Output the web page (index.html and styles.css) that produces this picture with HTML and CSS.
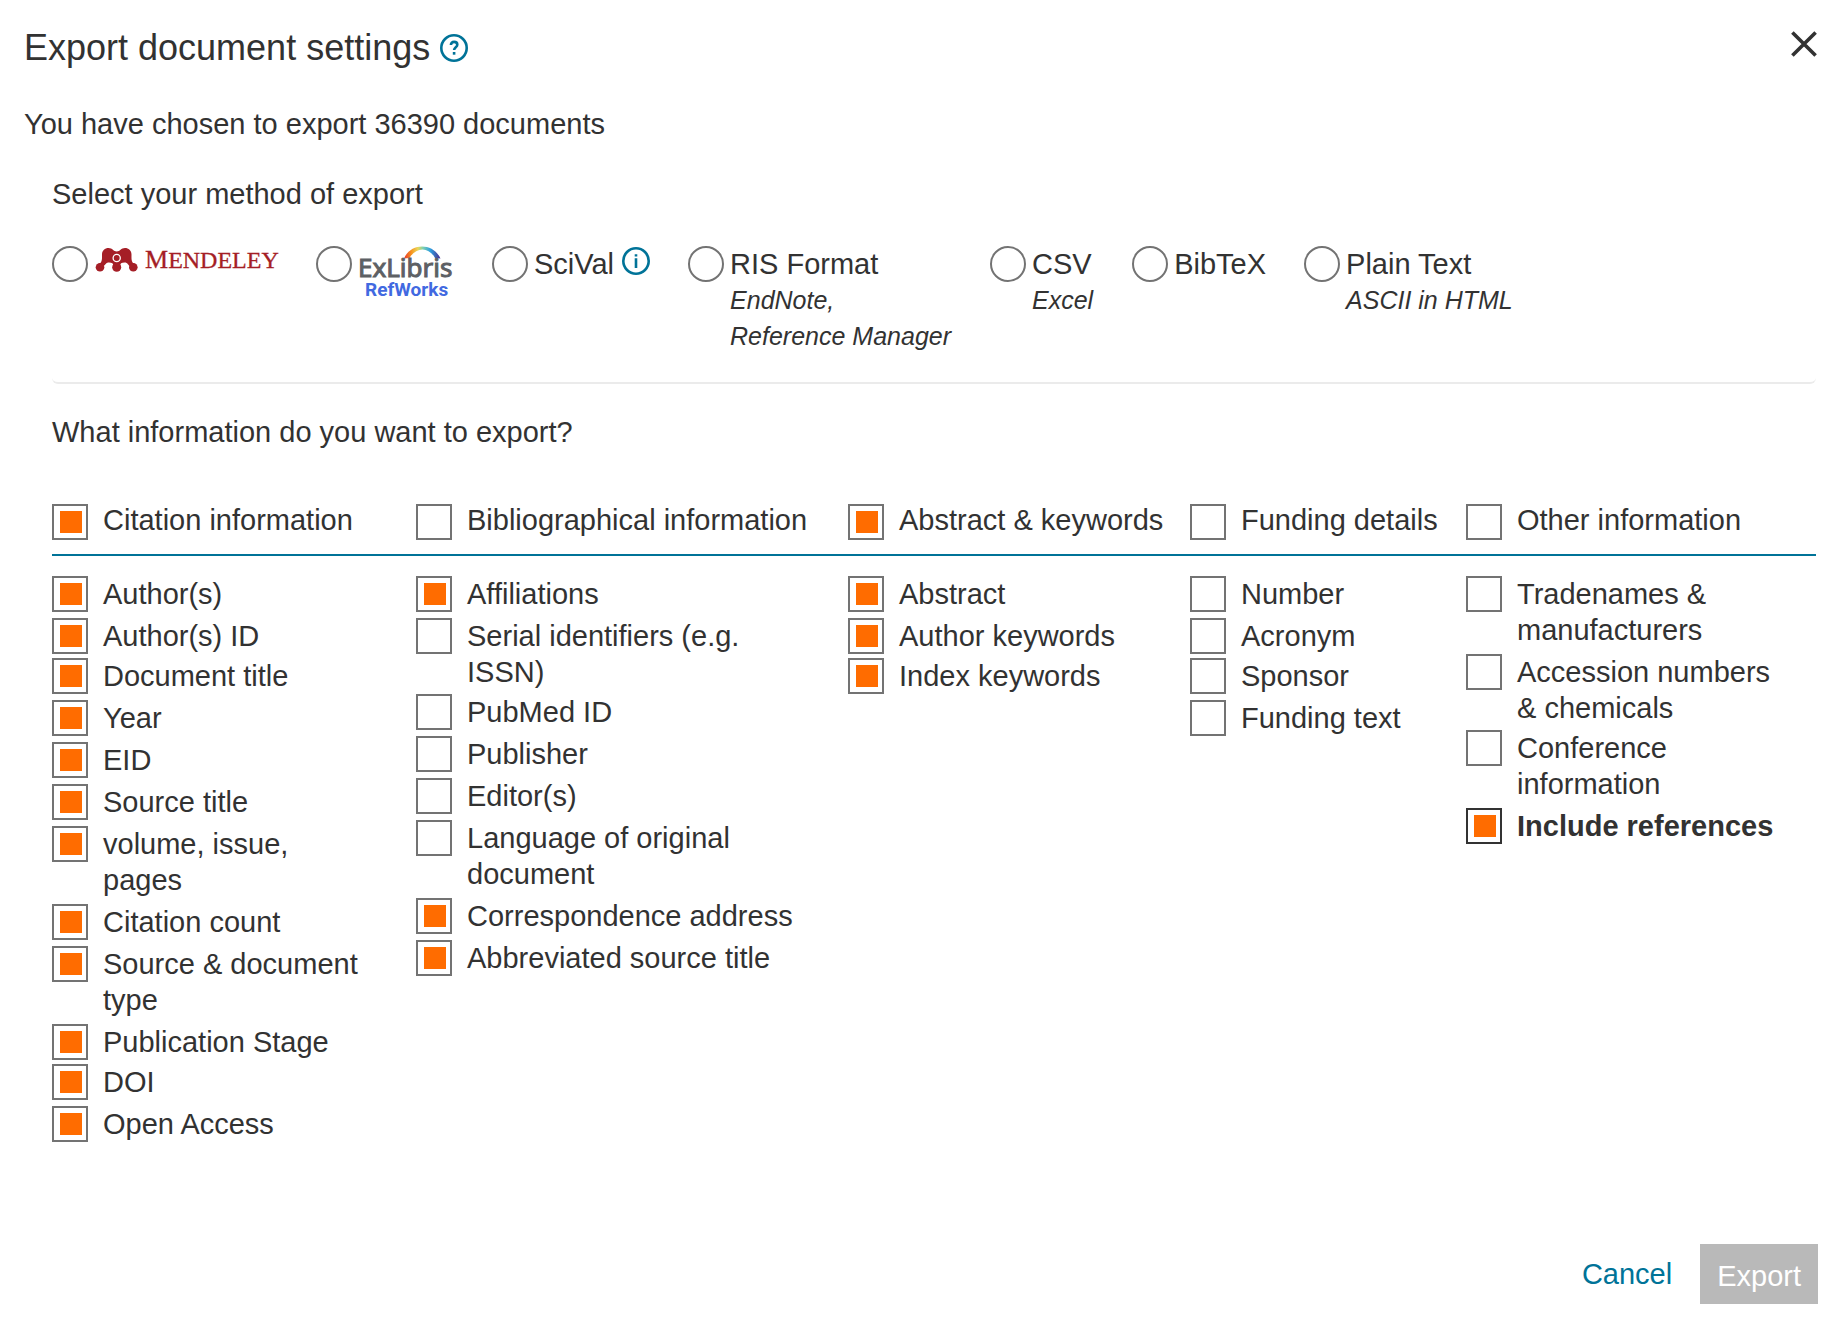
FILE: index.html
```html
<!DOCTYPE html>
<html lang="en">
<head>
<meta charset="utf-8">
<title>Export document settings</title>
<link rel="stylesheet" href="styles.css">
</head>
<body>
<form class="dialog" role="dialog" aria-labelledby="dialog-title">
  <header class="dialog-header">
    <h1 class="title" id="dialog-title">Export document settings</h1>
    <button class="icon-button" type="button" aria-label="Help">
      <svg class="info-icon" viewBox="0 0 28 28" aria-hidden="true"><circle cx="14" cy="14" r="12.7"/><path d="M10.9 11.1c0-2 1.3-3.2 3.2-3.2s3.2 1.1 3.2 2.8c0 2.5-3.2 2.500-3.2 5.400"/><path d="M14.1 18v2.700"/></svg>
    </button>
    <button class="icon-button close" type="button" aria-label="Close">
      <svg class="close-icon" viewBox="0 0 28 28" aria-hidden="true"><path d="M2.4 2.400l23.200 23.200M25.600 2.400L2.400 25.600"/></svg>
    </button>
  </header>

  <p class="summary">You have chosen to export 36390 documents</p>

  <div class="content">
    <section class="methods">
      <h2 class="question">Select your method of export</h2>
      <div class="method-list">
        <div class="method">
          <input class="radio" type="radio" name="method" id="mendeley">
          <label for="mendeley" aria-label="Mendeley">
            <svg class="mendeley" viewBox="0 0 184 36" aria-hidden="true">
              <g fill="#a51e26">
                <path d="M8 8.500C8 4.500 11 2 14.500 2c4 0 5 3.500 8.200 3.500S27 2 31 2c3.500 0 6.500 2.500 6.500 6.500 0 4-.5 8 3.500 9.500l-4.500 2.500C33.500 19 34 16.500 30.500 16.500c-3 0-4.500 1-4.500 3.500h-6.500c0-2.500-1.500-3.500-4.500-3.500-3.500 0-3 2.500-6.500 4L4.500 18C8.500 16.500 8 12.500 8 8.500z"/>
                <circle cx="6" cy="21.300" r="4.300"/><circle cx="22.700" cy="21.300" r="4.500"/><circle cx="39.300" cy="21.300" r="4.300"/>
              </g>
              <circle cx="22.700" cy="12" r="3.600" fill="#a51e26" stroke="#fff" stroke-width="1.300"/>
              <text class="mendeley-name" x="51" y="22">M<tspan class="mendeley-caps">ENDELEY</tspan></text>
            </svg>
          </label>
        </div>
        <div class="method">
          <input class="radio" type="radio" name="method" id="refworks">
          <label for="refworks" aria-label="ExLibris RefWorks">
            <svg class="refworks" viewBox="0 0 96 52" aria-hidden="true">
              <defs>
                <linearGradient id="rainbow" x1="0" x2="1"><stop offset="0" stop-color="#e8342b"/><stop offset=".2" stop-color="#f7931e"/><stop offset=".38" stop-color="#e9d75a"/><stop offset=".52" stop-color="#7fd0b0"/><stop offset=".72" stop-color="#2fa0e0"/><stop offset="1" stop-color="#4a2a8c"/></linearGradient>
              </defs>
              <path d="M46 12.500C53-3.500 75-3.500 82.500 12.500L77 12C71 .5 58 .5 51.500 12Z" fill="url(#rainbow)"/>
              <text class="exlibris-name" x="0" y="31">ExLibris</text>
              <text class="refworks-name" x="7" y="50">RefWorks</text>
            </svg>
          </label>
        </div>
        <div class="method">
          <input class="radio" type="radio" name="method" id="scival">
          <label for="scival">SciVal</label>
          <button class="icon-button scival-info" type="button" aria-label="About SciVal">
            <svg class="info-icon" viewBox="0 0 28 28" aria-hidden="true"><circle cx="14" cy="14" r="12.700"/><path d="M14 11.300v9.700M14 7.200v2.400"/></svg>
          </button>
        </div>
        <div class="method">
          <input class="radio" type="radio" name="method" id="ris">
          <label for="ris">RIS Format<span class="note">EndNote,<br>Reference Manager</span></label>
        </div>
        <div class="method">
          <input class="radio" type="radio" name="method" id="csv">
          <label for="csv">CSV<span class="note">Excel</span></label>
        </div>
        <div class="method">
          <input class="radio" type="radio" name="method" id="bibtex">
          <label for="bibtex">BibTeX</label>
        </div>
        <div class="method">
          <input class="radio" type="radio" name="method" id="plain">
          <label for="plain">Plain Text<span class="note">ASCII in HTML</span></label>
        </div>
      </div>
    </section>

    <section class="fields">
      <h2 class="question">What information do you want to export?</h2>
      <div class="field-grid field-heads">
        <label class="option"><input class="check" type="checkbox" checked>Citation information</label>
        <label class="option"><input class="check" type="checkbox">Bibliographical information</label>
        <label class="option"><input class="check" type="checkbox" checked>Abstract &amp; keywords</label>
        <label class="option"><input class="check" type="checkbox">Funding details</label>
        <label class="option"><input class="check" type="checkbox">Other information</label>
      </div>
      <div class="field-grid">
        <ul class="field-list">
          <li><label class="option"><input class="check" type="checkbox" checked>Author(s)</label></li>
          <li><label class="option"><input class="check" type="checkbox" checked>Author(s) ID</label></li>
          <li><label class="option"><input class="check" type="checkbox" checked>Document title</label></li>
          <li><label class="option"><input class="check" type="checkbox" checked>Year</label></li>
          <li><label class="option"><input class="check" type="checkbox" checked>EID</label></li>
          <li><label class="option"><input class="check" type="checkbox" checked>Source title</label></li>
          <li><label class="option"><input class="check" type="checkbox" checked>volume, issue, pages</label></li>
          <li><label class="option"><input class="check" type="checkbox" checked>Citation count</label></li>
          <li><label class="option"><input class="check" type="checkbox" checked>Source &amp; document type</label></li>
          <li><label class="option"><input class="check" type="checkbox" checked>Publication Stage</label></li>
          <li><label class="option"><input class="check" type="checkbox" checked>DOI</label></li>
          <li><label class="option"><input class="check" type="checkbox" checked>Open Access</label></li>
        </ul>
        <ul class="field-list">
          <li><label class="option"><input class="check" type="checkbox" checked>Affiliations</label></li>
          <li><label class="option"><input class="check" type="checkbox">Serial identifiers (e.g. ISSN)</label></li>
          <li><label class="option"><input class="check" type="checkbox">PubMed ID</label></li>
          <li><label class="option"><input class="check" type="checkbox">Publisher</label></li>
          <li><label class="option"><input class="check" type="checkbox">Editor(s)</label></li>
          <li><label class="option"><input class="check" type="checkbox">Language of original document</label></li>
          <li><label class="option"><input class="check" type="checkbox" checked>Correspondence address</label></li>
          <li><label class="option"><input class="check" type="checkbox" checked>Abbreviated source title</label></li>
        </ul>
        <ul class="field-list">
          <li><label class="option"><input class="check" type="checkbox" checked>Abstract</label></li>
          <li><label class="option"><input class="check" type="checkbox" checked>Author keywords</label></li>
          <li><label class="option"><input class="check" type="checkbox" checked>Index keywords</label></li>
        </ul>
        <ul class="field-list">
          <li><label class="option"><input class="check" type="checkbox">Number</label></li>
          <li><label class="option"><input class="check" type="checkbox">Acronym</label></li>
          <li><label class="option"><input class="check" type="checkbox">Sponsor</label></li>
          <li><label class="option"><input class="check" type="checkbox">Funding text</label></li>
        </ul>
        <ul class="field-list field-list-last">
          <li><label class="option"><input class="check" type="checkbox">Tradenames &amp; manufacturers</label></li>
          <li><label class="option"><input class="check" type="checkbox">Accession numbers &amp; chemicals</label></li>
          <li><label class="option"><input class="check" type="checkbox">Conference information</label></li>
          <li><label class="option option-active"><input class="check" type="checkbox" checked>Include references</label></li>
        </ul>
      </div>
    </section>
  </div>

  <footer class="actions">
    <a class="cancel" href="#">Cancel</a>
    <button class="export" type="submit" disabled>Export</button>
  </footer>
</form>
</body>
</html>
```
FILE: styles.css
```css
* {
  box-sizing: border-box;
}

body {
  margin: 0;
  background: #fff;
  color: #323232;
  font: 29px/36px "Liberation Sans", Arial, sans-serif;
}

.dialog {
  display: flex;
  flex-direction: column;
  min-height: 100vh;
  padding: 24px 24px 16px;
}

.dialog-header {
  display: flex;
  align-items: center;
  gap: 10px;
}

.title {
  margin: 0;
  font-size: 36px;
  font-weight: 400;
  line-height: 48px;
}

.icon-button {
  display: flex;
  padding: 0;
  border: 0;
  background: none;
  cursor: pointer;
}

.info-icon {
  width: 28px;
  height: 28px;
  fill: none;
  stroke: #007398;
  stroke-width: 2.6;
}

.close {
  align-self: flex-start;
  margin: 6px 0 0 auto;
}

.close-icon {
  width: 28px;
  height: 28px;
  fill: none;
  stroke: #323232;
  stroke-width: 3.6;
}

.summary {
  margin: 34px 0;
}

.content {
  padding: 0 2px 0 28px;
}

.question {
  margin: 0;
  font-size: 29px;
  font-weight: 400;
}

.methods {
  padding-bottom: 28px;
  border-bottom: 2px solid #ebebeb;
  border-radius: 6px;
}

.method-list {
  display: flex;
  flex-wrap: wrap;
  gap: 38px;
  margin-top: 34px;
}

.method {
  display: flex;
  align-items: flex-start;
  gap: 6px;
}

.radio,
.check {
  flex: none;
  appearance: none;
  width: 36px;
  height: 36px;
  margin: 0;
  border: 2px solid #737373;
  background: #fff;
}

.radio {
  border-radius: 50%;
}

.radio:checked,
.check:checked {
  padding: 5px;
  background: #ff6c00;
  background-clip: content-box;
}

.check:checked {
  padding: 5px 4px 5px 6px;
}

.note {
  display: block;
  padding-right: 1px;
  font-size: 25px;
  font-style: italic;
}

.mendeley,
.refworks {
  display: block;
  overflow: visible;
}

.mendeley {
  width: 184px;
  height: 36px;
}

.mendeley-name {
  fill: #a51e26;
  stroke: #a51e26;
  stroke-width: 0.3;
  font: 26px "Liberation Serif", "Times New Roman", serif;
}

.mendeley-caps {
  font-size: 24px;
}

.refworks {
  width: 96px;
  height: 52px;
}

.exlibris-name {
  fill: #5d6064;
  stroke: #5d6064;
  font: 26px "Noto Sans", sans-serif;
}

.refworks-name {
  fill: #4169e1;
  font: 700 19px Roboto, sans-serif;
}

.scival-info {
  margin: 1px 0 0 2px;
}

.fields {
  padding-top: 30px;
}

.field-grid {
  display: grid;
  grid-template-columns: 364fr 432fr 342fr 276fr 350fr;
  padding-top: 20px;
}

.field-heads {
  margin-top: 34px;
  padding: 18px 0 14px;
  border-bottom: 2px solid #007398;
}

.field-heads .check {
  margin-top: 2px;
}

.field-list {
  margin: 0;
  padding: 0 44px 0 0;
  list-style: none;
}

.field-list-last {
  padding-right: 36px;
}

.field-list li {
  margin-bottom: 6px;
}

.field-list li:nth-child(8n + 2) {
  margin-bottom: 4px;
}

.option {
  display: flex;
  align-items: flex-start;
  gap: 15px;
}

.option-active {
  font-weight: 700;
}

.option-active .check {
  border-color: #323232;
}

.actions {
  display: flex;
  align-items: center;
  justify-content: flex-end;
  gap: 28px;
  margin-top: auto;
}

.cancel {
  color: #007398;
  text-decoration: none;
}

.export {
  height: 60px;
  padding: 4px 17px 0;
  border: 0;
  background: #b9b9b9;
  color: #fff;
  font: inherit;
}
```
